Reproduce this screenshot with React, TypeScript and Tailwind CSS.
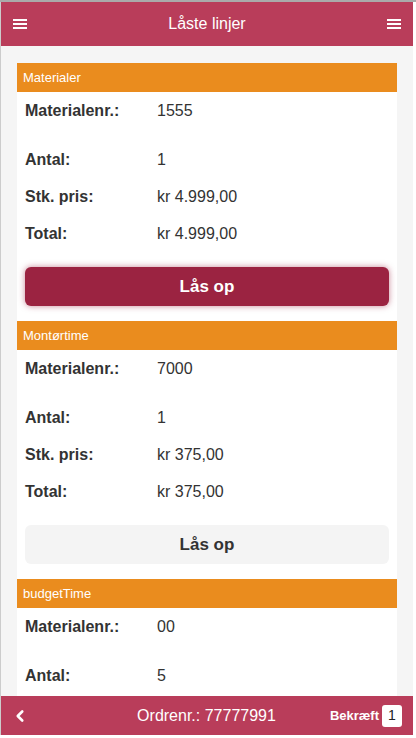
import { ChevronLeft } from "lucide-react";

type Line = {
  title: string;
  nr: string;
  antal: string;
  pris?: string;
  total?: string;
  active?: boolean;
};

const lines: Line[] = [
  { title: "Materialer", nr: "1555", antal: "1", pris: "kr 4.999,00", total: "kr 4.999,00", active: true },
  { title: "Montørtime", nr: "7000", antal: "1", pris: "kr 375,00", total: "kr 375,00" },
  { title: "budgetTime", nr: "00", antal: "5", pris: "kr 0,00", total: "kr 0,00" },
];

function Burger() {
  return (
    <div className="flex w-[14px] flex-col gap-[2px]">
      <span className="h-[2px] bg-white" />
      <span className="h-[2px] bg-white" />
      <span className="h-[2px] bg-white" />
    </div>
  );
}

function Row({ label, value, className = "" }: { label: string; value: string; className?: string }) {
  return (
    <div className={"flex h-[37px] items-center text-[16px] text-[#333] " + className}>
      <span className="w-[140px] shrink-0 pl-2 font-bold">{label}</span>
      <span>{value}</span>
    </div>
  );
}

function Card({ line }: { line: Line }) {
  return (
    <div className="bg-white">
      <div className="flex h-[29px] items-center bg-[#ea8c1e] px-[6px] text-[13px] text-white">{line.title}</div>
      <Row label="Materialenr.:" value={line.nr} />
      <Row label="Antal:" value={line.antal} className="mt-3" />
      <Row label="Stk. pris:" value={line.pris ?? ""} />
      <Row label="Total:" value={line.total ?? ""} />
      <div className="px-2 pt-[15px] pb-[15px]">
        <button
          type="button"
          className={
            line.active
              ? "h-[39px] w-full rounded-md bg-[#9b2341] text-[17px] font-bold text-white shadow-[0_0_6px_rgba(155,35,65,0.55)]"
              : "h-[39px] w-full rounded-md bg-[#f4f4f4] text-[17px] font-bold text-[#333]"
          }
        >
          Lås op
        </button>
      </div>
    </div>
  );
}

export default function App() {
  return (
    <div className="h-[738px] w-[416px] overflow-hidden bg-white font-['Liberation_Sans',Arial,sans-serif]">
      <div className="h-[2px] bg-[#aaa]" />
      <div className="flex h-[733px] w-[413px] flex-col border-l border-[#ccc] bg-[#f5f5f5]">
        <header className="flex h-[44px] shrink-0 items-center justify-between bg-[#b93d5a] px-[12px] text-white">
          <Burger />
          <span className="text-[16px]">Låste linjer</span>
          <Burger />
        </header>
        <main className="min-h-0 flex-1 overflow-hidden px-4 pt-[17px]">
          {lines.map((l) => (
            <Card key={l.title} line={l} />
          ))}
        </main>
        <footer className="grid h-[39px] shrink-0 grid-cols-[1fr_auto_1fr] items-center bg-[#b93d5a] pl-[10px] pr-[11px] text-white">
          <ChevronLeft size={18} strokeWidth={3.5} />
          <span className="text-[16px]">Ordrenr.: 77777991</span>
          <div className="flex items-center justify-end gap-[3px]">
            <span className="text-[13px] font-bold">Bekræft</span>
            <span className="flex h-[22px] w-[20px] items-center justify-center rounded-[3px] bg-white text-[14px] text-[#222]">1</span>
          </div>
        </footer>
      </div>
    </div>
  );
}
